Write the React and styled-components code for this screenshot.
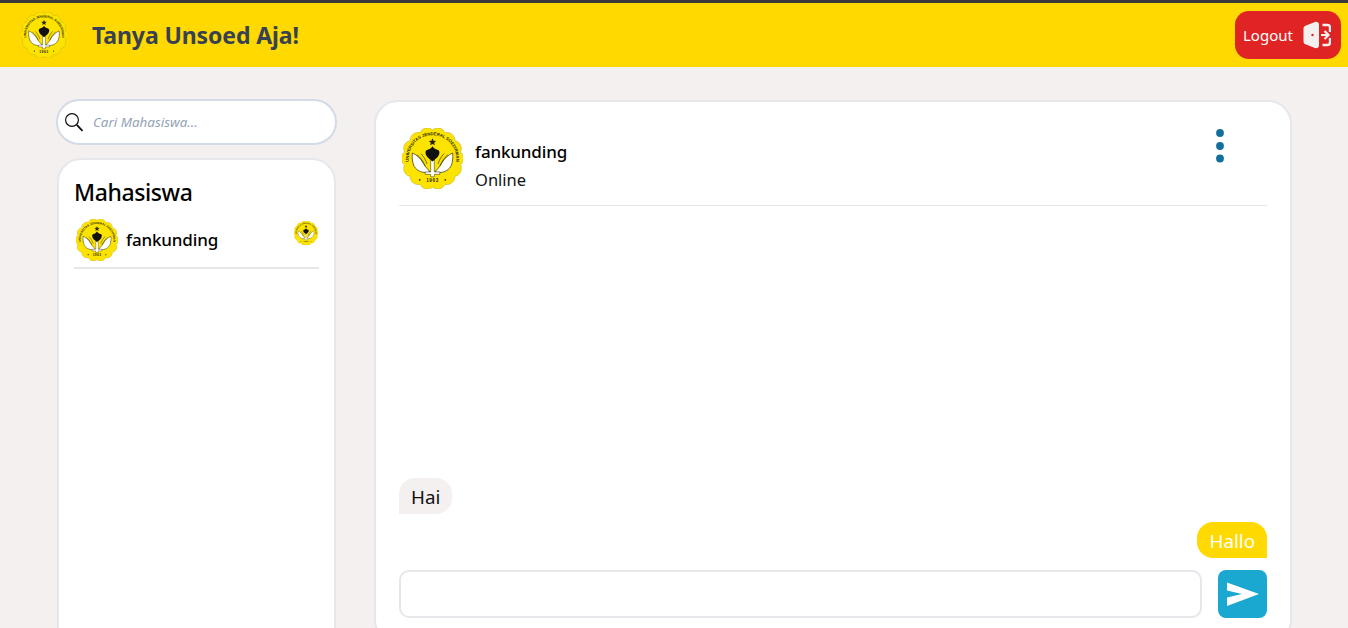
import React, { useId } from "react";
import styled, { createGlobalStyle } from "styled-components";

const sealPath = () => {
  // scalloped edge of the university seal
  const n = 14;
  let d = "";
  for (let i = 0; i < n; i++) {
    const a = (i / n) * Math.PI * 2 - Math.PI / 2;
    const x = 50 + 47 * Math.cos(a);
    const y = 50 + 47 * Math.sin(a);
    d += i === 0 ? `M${x.toFixed(1)} ${y.toFixed(1)}` : `A13 13 0 0 1 ${x.toFixed(1)} ${y.toFixed(1)}`;
  }
  return d + "A13 13 0 0 1 50 3Z";
};

const Seal = ({ size }) => {
  const id = useId().replace(/[^a-zA-Z0-9]/g, "");
  return (
    <SealSvg $size={size} viewBox="0 0 100 100">
      <path d={sealPath()} fill="#fde400" stroke="#b3a520" strokeWidth="0.8" />
      <path id={id} d="M15 68A39 39 0 1 1 85 68" fill="none" />
      <text fontSize="7" fontWeight="700" fontFamily="Liberation Sans, sans-serif" fill="#2a2700">
        <textPath href={`#${id}`} startOffset="50%" textAnchor="middle">UNIVERSITAS JENDERAL SOEDIRMAN</textPath>
      </text>
      <text x="50" y="89" fontSize="7.500" fontWeight="700" textAnchor="middle" fontFamily="Liberation Sans, sans-serif" fill="#2a2700" letterSpacing="1">1963</text>
      <circle cx="29" cy="85" r="1.400" fill="#2a2700" />
      <circle cx="71" cy="85" r="1.400" fill="#2a2700" />
      <path d="M17 41c7 3 14 9 18 17 3 6 8 10 11 14-11 3-21-1-26-9-3-6-4-15-3-22Z" fill="#fff" stroke="#3b3700" strokeWidth="1.200" />
      <path d="M83 41c-7 3-14 9-18 17-3 6-8 10-11 14 11 3 21-1 26-9 3-6 4-15 3-22Z" fill="#fff" stroke="#3b3700" strokeWidth="1.200" />
      <path d="M25 44c6 5 10 11 13 18M31 42c5 5 8 11 10 17M75 44c-6 5-10 11-13 18M69 42c-5 5-8 11-10 17" fill="none" stroke="#3b3700" strokeWidth="1.100" />
      <path d="M47 52h6v20h9v4H53v4h-6v-4H38v-4h9Z" fill="#fff" stroke="#3b3700" strokeWidth="0.900" />
      <path d="M50 30c2 3 4 5 9 6 3 1 3 6 1 9-2 4-6 6-10 10-4-4-8-6-10-10-2-3-2-8 1-9 5-1 7-3 9-6Z" fill="#111" />
      <path d="M50 17l1.800 4 4.200.4-3.200 2.800 1 4.200-3.800-2.200-3.800 2.200 1-4.200-3.200-2.800 4.200-.4Z" fill="#2a2700" />
    </SealSvg>
  );
};

const SearchIcon = () => (
  <IconSvg width="20" height="20" viewBox="0 0 20 20" fill="none">
    <circle cx="7" cy="8" r="6.400" stroke="#111" strokeWidth="1.200" />
    <path d="M11.800 12.800l5.700 6" stroke="#111" strokeWidth="1.800" />
  </IconSvg>
);

const LogoutIcon = () => (
  <IconSvg width="28" height="28" viewBox="0 0 28 28">
    <path d="M3 4.500 12 1c2-.5 4 .5 4 2.500v21c0 2-2 3-4 2.500l-9-3.500c-1.500-.5-2.500-1.500-2.500-3V7.500c0-1.500 1-2.500 2.500-3Z" fill="#f4f0ef" />
    <circle cx="9.500" cy="14" r="1.200" fill="#e02424" />
    <path d="M19.500 4h5c1.500 0 2.500 1 2.500 2.500V11M19.500 24h5c1.500 0 2.500-1 2.500-2.500V17" fill="none" stroke="#f4f0ef" strokeWidth="2.400" />
    <path d="M18 14h7.500M21.500 10l4 4-4 4" fill="none" stroke="#f4f0ef" strokeWidth="2.200" />
  </IconSvg>
);

const SendIcon = () => (
  <IconSvg width="34" height="24" viewBox="0 0 34 24">
    <path d="M1 0.500 33 12 1 24V15.500L16 12 1 8.500Z" fill="#fff" />
  </IconSvg>
);

const DotsIcon = () => (
  <IconSvg width="10" height="36" viewBox="0 0 10 36">
    <circle cx="5" cy="5" r="3.900" fill="#126e9b" />
    <circle cx="5" cy="18" r="3.900" fill="#126e9b" />
    <circle cx="5" cy="30.500" r="3.900" fill="#126e9b" />
  </IconSvg>
);

export default function App() {
  return (
    <Page>
      <GlobalStyle />
      <TopBar>
        <Brand>
          <Seal size={46} />
          <BrandName>Tanya Unsoed Aja!</BrandName>
        </Brand>
        <LogoutButton>
          Logout
          <LogoutIcon />
        </LogoutButton>
      </TopBar>
      <Content>
        <Sidebar>
          <SearchBox>
            <SearchIcon />
            <SearchInput placeholder="Cari Mahasiswa..." />
          </SearchBox>
          <ListCard>
            <ListTitle>Mahasiswa</ListTitle>
            <StudentRow>
              <Seal size={42} />
              <StudentName>fankunding</StudentName>
              <BadgeSlot>
                <Seal size={24} />
              </BadgeSlot>
            </StudentRow>
          </ListCard>
        </Sidebar>
        <ChatCard>
          <ChatHeader>
            <Seal size={61} />
            <PeerInfo>
              <PeerName>fankunding</PeerName>
              <PeerStatus>Online</PeerStatus>
            </PeerInfo>
            <MenuButton>
              <DotsIcon />
            </MenuButton>
          </ChatHeader>
          <Messages>
            <Bubble>Hai</Bubble>
            <Bubble $mine>Hallo</Bubble>
          </Messages>
          <Composer>
            <MessageInput />
            <SendButton>
              <SendIcon />
            </SendButton>
          </Composer>
        </ChatCard>
      </Content>
    </Page>
  );
}

const GlobalStyle = createGlobalStyle`
  html, body {
    margin: 0;
    height: 100%;
    overflow: hidden;
    background: #f4f0ef;
  }
  * {
    box-sizing: border-box;
  }
`;

const Page = styled.div`
  height: 628px;
  overflow: hidden;
  background: #f4f0ef;
  font-family: "Noto Sans", "Open Sans", sans-serif;
`;

const SealSvg = styled.svg`
  width: ${(p) => p.$size}px;
  height: ${(p) => p.$size}px;
  flex-shrink: 0;
  display: block;
`;

const IconSvg = styled.svg`
  display: block;
  flex-shrink: 0;
`;

const TopBar = styled.header`
  height: 67px;
  border-top: 3px solid #3a3a3a;
  background: #ffd900;
  display: flex;
  align-items: center;
  justify-content: space-between;
  padding: 0 7px 0 21px;
`;

const Brand = styled.div`
  display: flex;
  align-items: center;
  gap: 25px;
`;

const BrandName = styled.h1`
  margin: 0;
  font-size: 23px;
  font-weight: 700;
  letter-spacing: -0.1px;
  color: #374151;
`;

const LogoutButton = styled.button`
  width: 106px;
  height: 48px;
  padding: 0 10px 0 8px;
  border: none;
  border-radius: 14px;
  background: #e02424;
  color: #fff;
  font: 15px "Noto Sans", sans-serif;
  display: flex;
  align-items: center;
  justify-content: space-between;
`;

const Content = styled.main`
  display: grid;
  grid-template-columns: 281px 918px;
  gap: 37px;
  padding: 32px 0 0 56px;
`;

const Sidebar = styled.aside`
  display: flex;
  flex-direction: column;
  gap: 13px;
`;

const SearchBox = styled.label`
  height: 46px;
  display: flex;
  align-items: center;
  gap: 8px;
  padding: 0 7px;
  background: #fff;
  border: 2px solid #d3dbe8;
  border-radius: 23px;
`;

const SearchInput = styled.input`
  flex: 1;
  min-width: 0;
  padding: 0;
  border: none;
  outline: none;
  background: transparent;
  font: italic 13.400px "Noto Sans", sans-serif;

  &::placeholder {
    color: #94a3b8;
    opacity: 1;
  }
`;

const ListCard = styled.section`
  height: 520px;
  margin: 0 1px;
  padding: 15px 15px 0;
  background: #fff;
  border: 2px solid #e5e7eb;
  border-radius: 24px;
`;

const ListTitle = styled.h2`
  margin: 0;
  font-size: 23px;
  font-weight: 500;
  letter-spacing: -0.4px;
  line-height: 34px;
  color: #000;
`;

const StudentRow = styled.div`
  display: flex;
  align-items: center;
  gap: 8px;
  height: 54px;
  padding: 0 1px 3px 2px;
  border-bottom: 2px solid #e5e7eb;
  margin-top: 6px;
`;

const StudentName = styled.span`
  flex: 1;
  font-size: 17px;
  font-weight: 500;
  letter-spacing: -0.15px;
  color: #000;
`;

const BadgeSlot = styled.span`
  align-self: flex-start;
  margin-top: 6px;
`;

const ChatCard = styled.section`
  height: 544px;
  margin-top: 1px;
  padding: 0 23px;
  background: #fff;
  border: 2px solid #e5e7eb;
  border-radius: 24px;
  display: flex;
  flex-direction: column;
`;

const ChatHeader = styled.div`
  height: 104px;
  flex-shrink: 0;
  padding: 26px 0 0 3px;
  display: flex;
  align-items: flex-start;
  gap: 12px;
  border-bottom: 1px solid #e5e7eb;
`;

const PeerInfo = styled.div`
  flex: 1;
  padding-top: 10px;
`;

const PeerName = styled.div`
  font-size: 17px;
  font-weight: 500;
  letter-spacing: -0.15px;
  line-height: 28px;
  color: #000;
`;

const PeerStatus = styled.div`
  font-size: 16.500px;
  line-height: 28px;
  color: #111;
`;

const MenuButton = styled.div`
  margin-right: 42px;
`;

const Messages = styled.div`
  height: 364px;
  flex-shrink: 0;
  display: flex;
  flex-direction: column;
  justify-content: flex-end;
  gap: 8px;
  padding-bottom: 12px;
`;

const Bubble = styled.div`
  align-self: ${(p) => (p.$mine ? "flex-end" : "flex-start")};
  height: 36px;
  padding: 0 12px;
  font-size: 18.800px;
  line-height: 38px;
  background: ${(p) => (p.$mine ? "#ffd900" : "#f4f0ef")};
  color: ${(p) => (p.$mine ? "#fff" : "#111")};
  border-radius: ${(p) => (p.$mine ? "16px 16px 0 16px" : "16px 16px 16px 0")};
`;

const Composer = styled.div`
  display: flex;
  gap: 16px;
  flex-shrink: 0;
`;

const MessageInput = styled.input`
  flex: 1;
  height: 48px;
  border: 2px solid #e5e7eb;
  border-radius: 10px;
  outline: none;
`;

const SendButton = styled.button`
  width: 49px;
  height: 48px;
  padding: 0;
  border: none;
  border-radius: 8px;
  background: #1aa8d0;
  display: flex;
  align-items: center;
  justify-content: center;
`;
